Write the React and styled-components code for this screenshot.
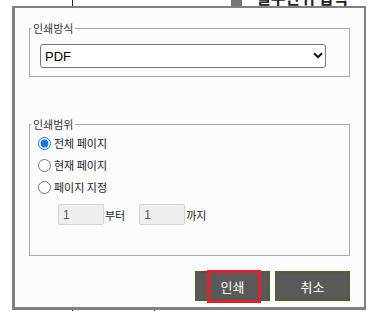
import React, { useState } from 'react';
import styled, { createGlobalStyle } from 'styled-components';

const GlobalStyle = createGlobalStyle`
  html, body {
    margin: 0;
    background: #fff;
    font-family: "Liberation Sans", "Noto Sans CJK KR", sans-serif;
  }
`;

const Page = styled.div`
  position: relative;
  width: 368px;
  height: 311px;
  overflow: hidden;
  background: #fff;
`;

const BackTable = styled.div`
  display: grid;
  grid-template-columns: 73px 82px 1fr;
  height: 100%;
`;

const BackCell = styled.div`
  margin-top: ${(p) => p.$from || 0}px;
  border-right: ${(p) => (p.$line ? '1px solid #222' : 'none')};
`;

const BackTitle = styled.div`
  display: flex;
  align-items: flex-end;
  gap: 14px;
  height: 20px;
  margin: -13px 0 0 76px;
  font: bold 16px/20px "Noto Sans CJK KR", sans-serif;
  color: #222;
  white-space: nowrap;
`;

const BackBox = styled.span`
  display: inline-block;
  width: 11px;
  height: 14px;
  margin-bottom: 1px;
  background: #777;
`;

const Dialog = styled.div`
  position: absolute;
  left: 12px;
  top: 6px;
  width: 354px;
  height: 304px;
  box-sizing: border-box;
  border: 3px solid #808080;
  border-top-width: 2px;
  border-right-width: 2px;
  background: #fcfcfc;
  padding: 12px 14px 0 14px;
  display: flex;
  flex-direction: column;
`;

const Group = styled.fieldset`
  margin: ${(p) => p.$top || 0}px 0 0 0;
  border: 1px solid #a9a9a9;
  padding: 0 0 ${(p) => p.$bottom}px 0;
  min-inline-size: 0;
`;

const Legend = styled.legend`
  margin-left: 1px;
  padding: 0 2px;
  font: 11px/16px "Noto Sans CJK KR", sans-serif;
  color: #333;
`;

const SelectWrap = styled.div`
  position: relative;
  width: 286px;
  margin: 8px 0 0 10px;
`;

const Select = styled.select`
  appearance: none;
  display: block;
  width: 100%;
  height: 24px;
  box-sizing: border-box;
  border: 1px solid #767676;
  border-radius: 3px;
  background: #fff;
  padding: 0 0 0 4px;
  font: 13px "Liberation Sans", sans-serif;
  color: #000;
`;

const Chevron = styled.svg`
  position: absolute;
  right: 3px;
  top: 8px;
  width: 10px;
  height: 7px;
  pointer-events: none;
`;

const RadioRow = styled.label`
  display: flex;
  align-items: center;
  height: 22px;
  font: 11px "Noto Sans CJK KR", sans-serif;
  color: #222;
`;

const Radio = styled.input`
  width: 13px;
  height: 13px;
  margin: 0 3px 0 8px;
  accent-color: #1a73e8;
`;

const RangeRow = styled.div`
  display: flex;
  align-items: center;
  margin: 6px 0 0 28px;
  font: 11px "Noto Sans CJK KR", sans-serif;
  color: #222;
`;

const PageInput = styled.input`
  width: 46px;
  height: 21px;
  box-sizing: border-box;
  border: 1px solid #d4d4d4;
  border-radius: 2px;
  background: #efefef;
  padding: 0 0 0 4px;
  font: 12px "Liberation Sans", sans-serif;
  color: #555;
`;

const RangeText = styled.span`
  margin: 0 ${(p) => p.$gap || 0}px 0 1px;
`;

const Actions = styled.div`
  display: flex;
  justify-content: flex-end;
  gap: 5px;
  margin-top: 15px;
`;

const ButtonSlot = styled.div`
  position: relative;
`;

const Button = styled.button`
  width: 75px;
  height: 30px;
  box-sizing: border-box;
  border: 2px solid #4f5e33;
  background: #595959;
  color: #fff;
  font: 13px "Noto Sans CJK KR", sans-serif;
  padding: 0;
`;

const Highlight = styled.div`
  position: absolute;
  left: 12px;
  top: -1px;
  width: 54px;
  height: 33px;
  box-sizing: border-box;
  border: 3px solid #e3202a;
  pointer-events: none;
`;

export default function App() {
  const [range, setRange] = useState('all');

  return (
    <Page>
      <GlobalStyle />
      <BackTable>
        <BackCell $line />
        <BackCell $line $from={12} />
        <BackCell>
          <BackTitle>
            <BackBox />
            일주단위 입력
          </BackTitle>
        </BackCell>
      </BackTable>

      <Dialog>
        <Group $bottom={8}>
          <Legend>인쇄방식</Legend>
          <SelectWrap>
            <Select defaultValue="pdf">
              <option value="pdf">PDF</option>
            </Select>
            <Chevron viewBox="0 0 10 7">
              <path d="M1 1.2 L5 5.2 L9 1.2" fill="none" stroke="#111" strokeWidth="2" />
            </Chevron>
          </SelectWrap>
        </Group>

        <Group $top={39} $bottom={30}>
          <Legend>인쇄범위</Legend>
          <RadioRow>
            <Radio type="radio" name="range" checked={range === 'all'} onChange={() => setRange('all')} />
            전체 페이지
          </RadioRow>
          <RadioRow>
            <Radio type="radio" name="range" checked={range === 'current'} onChange={() => setRange('current')} />
            현재 페이지
          </RadioRow>
          <RadioRow>
            <Radio type="radio" name="range" checked={range === 'pick'} onChange={() => setRange('pick')} />
            페이지 지정
          </RadioRow>
          <RangeRow>
            <PageInput defaultValue="1" disabled={range !== 'pick'} />
            <RangeText $gap={14}>부터</RangeText>
            <PageInput defaultValue="1" disabled={range !== 'pick'} />
            <RangeText>까지</RangeText>
          </RangeRow>
        </Group>

        <Actions>
          <ButtonSlot>
            <Button>인쇄</Button>
            <Highlight />
          </ButtonSlot>
          <Button>취소</Button>
        </Actions>
      </Dialog>
    </Page>
  );
}
